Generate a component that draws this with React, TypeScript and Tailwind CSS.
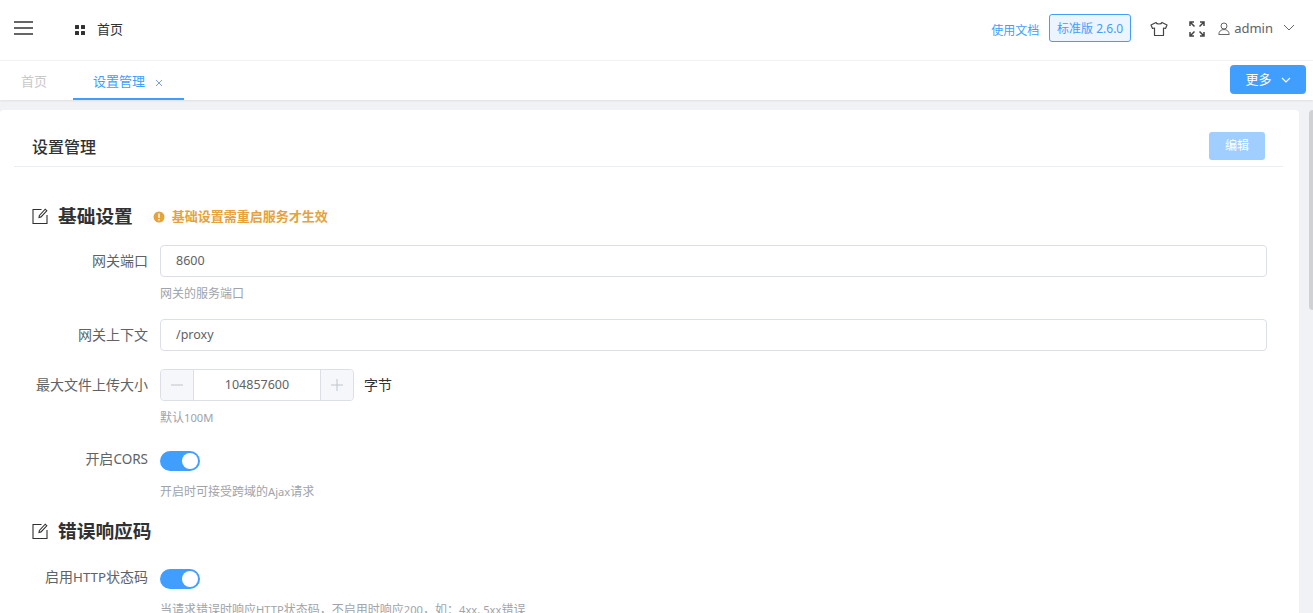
import React from "react";

const font = { fontFamily: '"Noto Sans", "Noto Sans CJK SC", sans-serif' };

function EditIcon() {
  return (
    <svg width="16" height="16" viewBox="0 0 16 16" fill="none" stroke="#303133" strokeWidth="1.1" className="shrink-0">
      <path d="M9.5 1.5H1v14h14V7" />
      <path d="M7 9.5l.4-2L13.2 1.2l1.6 1.6L9 8.9z" />
    </svg>
  );
}

function Switch() {
  return (
    <div className="w-10 h-5 rounded-full bg-[#409eff] flex items-center justify-end pr-[2px]">
      <div className="w-4 h-4 rounded-full bg-white" />
    </div>
  );
}

function L({ children }: { children: React.ReactNode }) {
  return <span className="text-[11.2px]">{children}</span>;
}

function Row({ label, children, hint, hintH = "h-[33px]" }: { label: React.ReactNode; children: React.ReactNode; hint?: React.ReactNode; hintH?: string }) {
  return (
    <div className="flex">
      <div className="w-[134px] shrink-0 text-right text-sm text-[#606266] leading-8 whitespace-nowrap">{label}</div>
      <div className="ml-3 flex-1 min-w-0">
        {children}
        {hint && <div className={`text-xs text-[#a0a3a9] leading-[18px] whitespace-nowrap pt-2 ${hintH}`}>{hint}</div>}
      </div>
    </div>
  );
}

function TextInput({ value }: { value: string }) {
  return (
    <div className="h-8 rounded border border-[#dcdfe6] px-[15px] flex items-center text-[12.5px] text-[#606266]">{value}</div>
  );
}

export default function App() {
  return (
    <div style={font} className="w-[1313px] h-[613px] overflow-hidden bg-[#f0f2f5] flex flex-col">
      <header className="h-[61px] shrink-0 bg-white border-b border-[#f2f2f2] flex items-center">
        <svg width="19" height="14" viewBox="0 0 19 14" className="ml-[14px] mb-[4px]" fill="#666">
          <rect x="0" y="0" width="19" height="2" />
          <rect x="0" y="6" width="19" height="2" />
          <rect x="0" y="12" width="19" height="2" />
        </svg>
        <svg width="10" height="10" viewBox="0 0 10 10" fill="#303133" className="ml-[42px]">
          <rect x="0" y="0" width="4" height="4" rx="0.5" />
          <rect x="6" y="0" width="4" height="4" rx="0.5" />
          <rect x="0" y="6" width="4" height="4" rx="0.5" />
          <rect x="6" y="6" width="4" height="4" rx="0.5" />
        </svg>
        <span className="ml-3 text-[13px] text-[#303133]">首页</span>
        <div className="flex-1" />
        <span className="text-xs text-[#409eff] mt-[2px]">使用文档</span>
        <div className="ml-[10px] mb-[4px] pt-[1px] w-[82px] h-7 rounded-[3px] border border-[#409eff] bg-[#ecf5ff] text-[#409eff] text-xs flex items-center justify-center">标准版 2.6.0</div>
        <svg width="18" height="16" viewBox="0 0 18 16" fill="none" stroke="#444" strokeWidth="1.2" strokeLinejoin="round" className="ml-[19px] mb-[3px]">
          <path d="M6 1.5L1 4l1.5 3.5L4.5 7v7.5h9V7l2 .5L17 4l-5-2.5c-.5 2-5.500 2-6 0z" />
        </svg>
        <svg width="16" height="16" viewBox="0 0 16 16" fill="none" stroke="#444" strokeWidth="1.5" className="ml-[21px] mb-[3px]">
          <path d="M1 5V1h4M1 1l4.500 4.500M11 1h4v4M15 1l-4.500 4.500M1 11v4h4M1 15l4.500-4.500M15 11v4h-4M15 15l-4.500-4.500" />
        </svg>
        <svg width="12" height="13" viewBox="0 0 12 13" fill="none" stroke="#666" strokeWidth="1" className="ml-[13px] mb-[3px]">
          <circle cx="6" cy="4" r="3" />
          <path d="M.8 12.500c0-3 2.200-5 5.200-5s5.200 2 5.200 5z" />
        </svg>
        <span className="ml-[4px] mb-[3px] text-[13px] text-[#606266]">admin</span>
        <svg width="12" height="7" viewBox="0 0 12 7" fill="none" stroke="#666" strokeWidth="1" className="ml-[10px] mr-[18px] mb-[5px]">
          <path d="M1 1l5 5 5-5" />
        </svg>
      </header>

      <div className="h-[39px] shrink-0 bg-white shadow-[0_1px_2px_rgba(0,0,0,0.08)] flex items-stretch text-sm z-10">
        <div className="w-[73px] pl-[21px] leading-[40px] text-[#c9c9c9] text-[13px]">首页</div>
        <div className="w-[111px] border-b-2 border-[#409eff] flex items-center pl-5 pt-[3px] text-[#409eff] text-[13px]">
          设置管理
          <svg width="8" height="8" viewBox="0 0 8 8" stroke="#7f9fd8" strokeWidth="1" className="ml-[10px] mt-[3px]">
            <path d="M1 1l6 6M7 1L1 7" />
          </svg>
        </div>
        <div className="flex-1" />
        <div className="mt-[4px] mr-[7px] w-[76px] h-[29px] rounded bg-[#409eff] text-white text-[13px] flex items-center justify-center gap-[9px]">
          更多
          <svg width="10" height="6" viewBox="0 0 10 6" fill="none" stroke="#fff" strokeWidth="1.100">
            <path d="M1 1l4 4 4-4" />
          </svg>
        </div>
      </div>

      <div className="flex-1 min-h-0 pt-[10px] flex overflow-hidden">
        <main className="w-[1299px] shrink-0 bg-white rounded-t pl-[14px] pr-[16px]">
          <div className="h-[57px] border-b border-[#ebeef5] flex items-center pl-[18px] pr-[18px] pt-[16px]">
            <span className="text-base font-medium text-[#303133] mt-[1px]">设置管理</span>
            <div className="flex-1" />
            <div className="w-[56px] h-7 rounded-[3px] bg-[#a0cfff] text-white text-xs flex items-center justify-center">编辑</div>
          </div>

          <div className="flex items-center h-[28px] mt-[35px] mb-[15px] ml-[18px]">
            <EditIcon />
            <h3 className="ml-[10px] text-[18.72px] font-bold text-[#303133]">基础设置</h3>
            <svg width="12" height="12" viewBox="0 0 12 12" className="ml-[20px] mt-[2px]">
              <circle cx="6" cy="6" r="5.500" fill="#e6a23c" />
              <rect x="5.300" y="2.500" width="1.400" height="4.500" fill="#fff" />
              <rect x="5.300" y="8" width="1.400" height="1.500" fill="#fff" />
            </svg>
            <span className="ml-[7px] mt-[2px] text-[13px] font-bold text-[#e6a23c]">基础设置需重启服务才生效</span>
          </div>

          <div className="w-[1253px]">
            <Row label="网关端口" hint="网关的服务端口" hintH="h-[42px]"><TextInput value="8600" /></Row>
            <Row label="网关上下文"><TextInput value="/proxy" /></Row>
          </div>
          <div className="h-[18px]" />
          <Row label="最大文件上传大小" hint={<>默认<L>100M</L></>} hintH="h-[42px]">
            <div className="flex items-center">
              <div className="w-[194px] h-8 rounded border border-[#dcdfe6] flex text-[12.5px] text-[#606266]">
                <div className="w-[33px] bg-[#f5f7fa] border-r border-[#dcdfe6] rounded-l flex items-center justify-center">
                  <svg width="12" height="12" viewBox="0 0 12 12" stroke="#c0c4cc" strokeWidth="1"><path d="M0 6h12" /></svg>
                </div>
                <div className="flex-1 flex items-center justify-center">104857600</div>
                <div className="w-[33px] bg-[#f5f7fa] border-l border-[#dcdfe6] rounded-r flex items-center justify-center">
                  <svg width="12" height="12" viewBox="0 0 12 12" stroke="#c0c4cc" strokeWidth="1"><path d="M0 6h12M6 0v12" /></svg>
                </div>
              </div>
              <span className="ml-[10px] text-sm text-[#303133]">字节</span>
            </div>
          </Row>
          <Row label={<>开启<span className="text-[13.5px]">CORS</span></>} hint={<>开启时可接受跨域的<L>Ajax</L>请求</>} hintH="h-[34px]">
            <div className="h-8 flex items-center pt-[4px]"><Switch /></div>
          </Row>
          <div className="ml-[18px] flex items-center h-[28px] mt-[8px] mb-[16px]">
            <EditIcon />
            <h3 className="ml-[10px] text-[18.72px] font-bold text-[#303133]">错误响应码</h3>
          </div>
          <Row
            label={<>启用<span className="text-[13.3px]">HTTP</span>状态码</>}
            hint={<>当请求错误时响应<L>HTTP</L>状态码，不启用时响应<L>200</L>，如：<L>4xx, 5xx</L>错误</>}
          >
            <div className="h-8 flex items-center pt-[4px]"><Switch /></div>
          </Row>
        </main>
        <div className="flex-1 flex justify-end">
          <div className="w-[4px] ml-[10px] h-[200px] rounded-l bg-[#d0d1d4]" />
        </div>
      </div>
    </div>
  );
}
